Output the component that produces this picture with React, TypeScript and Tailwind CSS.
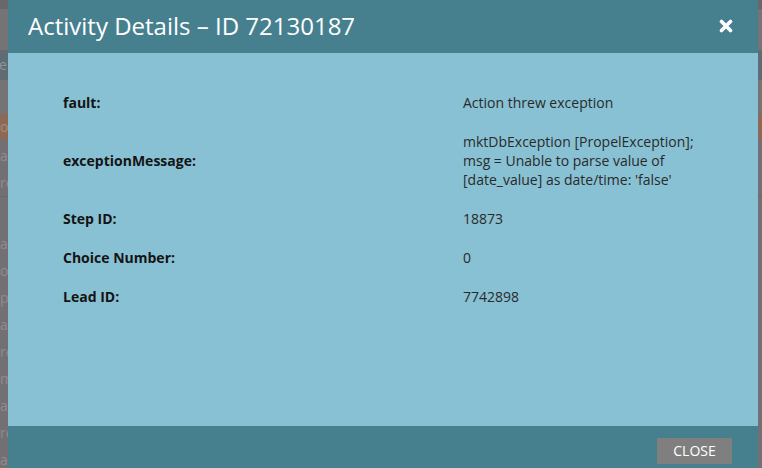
import React from "react";

const rows: { label: string; value: string[] }[] = [
  { label: "fault:", value: ["Action threw exception"] },
  {
    label: "exceptionMessage:",
    value: [
      "mktDbException [PropelException];",
      "msg = Unable to parse value of",
      "[date_value] as date/time: 'false'",
    ],
  },
  { label: "Step ID:", value: ["18873"] },
  { label: "Choice Number:", value: ["0"] },
  { label: "Lead ID:", value: ["7742898"] },
];

const bgWords = [
  "apply",
  "reset",
  "",
  "",
  "action",
  "open",
  "pause",
  "add",
  "remove",
  "move",
  "alert",
  "reset",
  "add",
];

export default function App() {
  return (
    <div
      className="relative w-[762px] h-[468px] overflow-hidden bg-[#737073]"
      style={{ fontFamily: '"Open Sans", "Liberation Sans", sans-serif' }}
    >
      {/* dimmed page behind the dialog */}
      <div className="flex flex-col w-full">
        <div className="h-[9px] bg-[#6a676a]" />
        <div className="h-[41px] bg-[#767375]" />
        <div className="h-[30px] bg-[#5f6c74] text-[14px] leading-[30px] text-[#8a9499]">
          <span className="-ml-[1px]">e</span>
        </div>
        <div className="h-[34px] bg-[#767375]" />
        <div className="h-[26px] bg-[#8a6a56] text-[14px] leading-[26px] text-[#a88a78]">
          <span>o</span>
        </div>
        <div className="flex flex-col text-[14px] leading-[27px] text-[#8f8c8e] pt-[2px]">
          {bgWords.slice(0, 2).map((w, i) => (
            <div key={"a" + i}>{w}</div>
          ))}
          <div className="h-[34px] border-t border-[#6c696b]" />
          {bgWords.slice(4).map((w, i) => (
            <div key={"b" + i}>{w}</div>
          ))}
        </div>
      </div>

      {/* dialog */}
      <div className="absolute left-[8px] top-0 w-[750px] h-[480px] flex flex-col">
        <div className="h-[53px] bg-[#46808f] flex items-center justify-between pl-[20px] pr-[25px]">
          <span className="text-white text-[24px] leading-none -mt-[1px]">
            Activity Details – ID 72130187
          </span>
          <svg width="14" height="14" viewBox="0 0 14 14" className="-mt-[1px]">
            <path
              d="M2.5 2.5 L11.5 11.5 M11.5 2.5 L2.5 11.5"
              stroke="white"
              strokeWidth="3.6"
              strokeLinecap="round"
              fill="none"
            />
          </svg>
        </div>
        <div className="h-[373px] bg-[#88c1d3] pt-[30px] pl-[55px]">
          <div className="flex flex-col text-[14px] leading-[19px]">
            {rows.map((r) => (
              <div key={r.label} className="flex items-center py-[10px]">
                <div className="w-[400px] font-bold text-[#141414]">{r.label}</div>
                <div className="text-[#2a2a2a]">
                  {r.value.map((v) => (
                    <div key={v}>{v}</div>
                  ))}
                </div>
              </div>
            ))}
          </div>
        </div>
        <div className="flex-1 bg-[#46808f] flex justify-end pt-[12px] pr-[26px]">
          <button className="w-[75px] h-[26px] bg-[#7f7f7f] text-white text-[14px] leading-none uppercase">
            Close
          </button>
        </div>
      </div>
    </div>
  );
}
